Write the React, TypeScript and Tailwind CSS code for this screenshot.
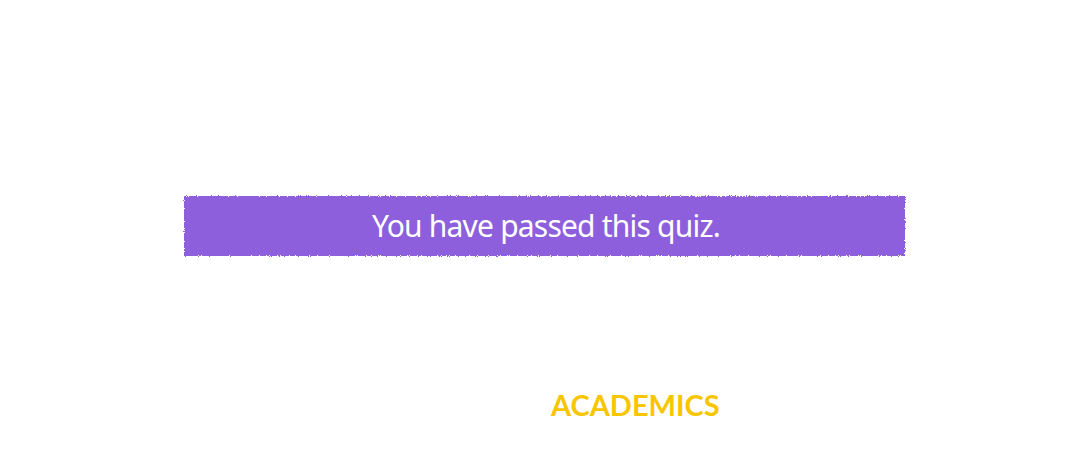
export default function App() {
  return (
    <div className="w-[1074px] h-[455px] bg-white flex flex-col" style={{ fontFamily: '"Open Sans", sans-serif' }}>
      <svg width="0" height="0" className="absolute">
        <filter id="rough">
          <feTurbulence type="fractalNoise" baseFrequency="0.9" numOctaves="2" result="noise" />
          <feDisplacementMap in="SourceGraphic" in2="noise" scale="4" />
        </filter>
      </svg>
      <div className="h-[196px]" />
      <div className="relative ml-[184px] w-[721px] h-[60px]">
        <div className="absolute inset-0 bg-[#8d5fdc]" style={{ filter: 'url(#rough)' }} />
        <div className="relative h-full flex items-center justify-center pl-[3px] pb-[2px] text-white text-[30px] tracking-[-0.8px]" style={{ fontFamily: '"Noto Sans", sans-serif' }}>
          You have passed this quiz.
        </div>
      </div>
      <div className="h-[134px]" />
      <div className="pl-[551px] text-[#f7c600] text-[29px] font-bold leading-none tracking-[0px]" style={{ fontFamily: 'Lato, sans-serif' }}>
        ACADEMICS
      </div>
    </div>
  );
}
